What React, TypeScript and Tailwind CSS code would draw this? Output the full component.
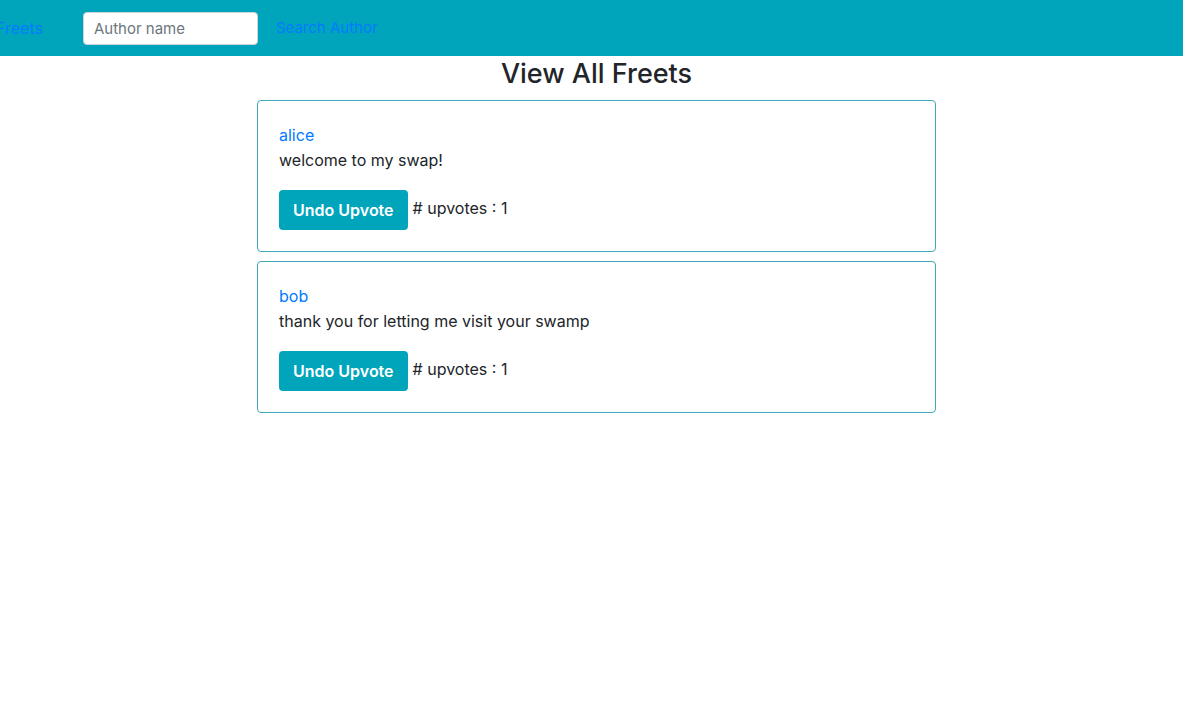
import React from "react";

const freets = [
  { author: "alice", text: "welcome to my swap!" },
  { author: "bob", text: "thank you for letting me visit your swamp" },
];

export default function App() {
  return (
    <div className="min-h-[717px] bg-white text-[#212529]" style={{ fontFamily: "Inter, 'Liberation Sans', sans-serif" }}>
      <nav className="h-[56px] bg-[#00a5bb] flex items-center">
        <a className="ml-[-4px] text-[16px] text-[#007bff]">Freets</a>
        <input
          className="ml-[40px] w-[175px] h-[33px] rounded-[4px] border border-[#ced4da] bg-white px-[10px] text-[15px] text-[#495057] placeholder:text-[#6c757d] outline-none"
          placeholder="Author name"
        />
        <a className="ml-[18px] text-[15px] text-[#007bff]">Search Author</a>
      </nav>
      <div className="flex flex-col items-center pl-[10px]">
        <h2 className="text-[27px] leading-[34px] font-medium mt-[1px] mb-[9px]">View All Freets</h2>
        <div className="flex flex-col gap-[9px] w-[679px]">
          {freets.map((f) => (
            <div key={f.author} className="border border-[#3fa9ba] rounded-[4px] px-[21px] pt-[22px] pb-[21px]">
              <div className="text-[16px] leading-[24px] text-[#007bff]">{f.author}</div>
              <p className="text-[16px] leading-[26px] mb-[17px]">{f.text}</p>
              <div className="flex items-center">
                <button className="h-[40px] px-[14px] rounded-[4px] bg-[#00a5bb] text-white text-[16px] font-semibold">
                  Undo Upvote
                </button>
                <span className="ml-[5px] text-[16px] mb-[4px]"># upvotes : 1</span>
              </div>
            </div>
          ))}
        </div>
      </div>
    </div>
  );
}
